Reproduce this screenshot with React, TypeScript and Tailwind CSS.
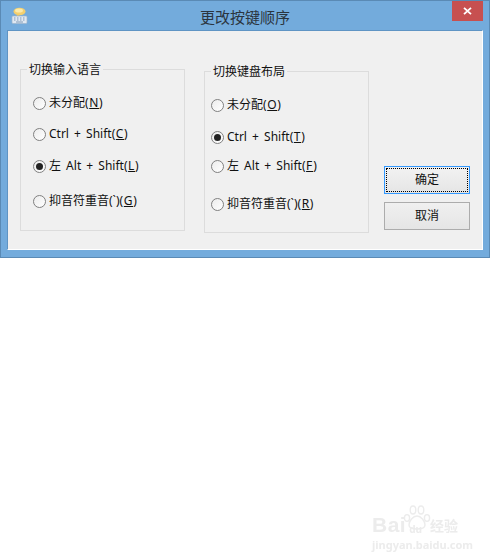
const font = { fontFamily: '"Noto Sans", "Noto Sans CJK SC", sans-serif' };

function Radio({ label, k, after, checked, mt }: { label: string; k: string; after?: string; checked?: boolean; mt: string }) {
  return (
    <div className={`flex items-center h-[16px] ${mt}`}>
      <span className="w-[13px] h-[13px] rounded-full border border-[#808080] bg-gradient-to-br from-[#ececec] to-white flex items-center justify-center shrink-0">
        {checked && <span className="w-[7px] h-[7px] rounded-full bg-[#222222]" />}
      </span>
      <span className="ml-[3px] text-[12px] leading-[16px] text-[#111111] whitespace-pre [word-spacing:2px]">
        {label}<span className="tracking-[0.6px]">(<span className="underline">{k}</span>)</span>{after}
      </span>
    </div>
  );
}

function Group({ title, children, mt, pad }: { title: string; children: React.ReactNode; mt: string; pad: string }) {
  return (
    <div className={`relative w-[165px] h-[162px] border border-[#dcdcdc] ${pad} ${mt}`}>
      <span className="absolute left-[6px] top-[-8px] px-[2px] bg-[#f0f0f0] text-[12px] leading-[16px] text-[#111111] whitespace-pre">{title}</span>
      {children}
    </div>
  );
}

export default function App() {
  return (
    <div className="w-[490px] h-[560px] bg-white relative overflow-hidden" style={font}>
      <div className="h-[258px] bg-[#73abdc] border border-[#5a8ab5] flex flex-col">
        <div className="h-[29px] flex items-start relative shrink-0">
          <svg className="ml-[10px] mt-[6px]" width="17" height="17" viewBox="0 0 17 17">
            <ellipse cx="8.5" cy="4.5" rx="6" ry="3.8" fill="#f3cf6e" />
            <ellipse cx="8" cy="3.5" rx="4" ry="2" fill="#fbeaa8" />
            <path d="M6 7.5 L5.5 10 L9 8Z" fill="#f0c45c" />
            <rect x="1" y="9" width="15" height="7.5" rx="1" fill="#dfe8f2" stroke="#9db4cc" strokeWidth="0.7" />
            <path d="M3 11h1.5M6 11h1.5M9 11h1.5M12 11h1.5M3 13h1.5M6 13h1.5M9 13h1.5M12 13h1.5M5 15h7" stroke="#7f9ab8" strokeWidth="1" />
          </svg>
          <div className="absolute left-[199px] top-[6px] text-[15px] leading-[20px] text-[#2b3540] whitespace-pre">更改按键顺序</div>
          <div className="absolute left-[451px] top-0 w-[31px] h-[20px] bg-[#c75050] flex items-center justify-center">
            <svg width="9" height="8" viewBox="0 0 9 8">
              <path d="M1 .8 8 7.2M8 .8 1 7.2" stroke="#ffffff" strokeWidth="1.8" />
            </svg>
          </div>
        </div>
        <div className="ml-[6px] w-[476px] h-[220px] bg-[#f0f0f0] border border-[#5f94c4] border-b-white border-r-white flex pl-[12px]">
          <Group title="切换输入语言" mt="mt-[38px]" pad="pl-[12px]">
            <Radio label="未分配" k="N" mt="mt-[25px]" />
            <Radio label="Ctrl + Shift" k="C" mt="mt-[15px]" />
            <Radio label="左 Alt + Shift" k="L" checked mt="mt-[16px]" />
            <Radio label="抑音符重音(`)" k="G" mt="mt-[19px]" />
          </Group>
          <div className="ml-[19px]">
            <Group title="切换键盘布局" mt="mt-[40px]" pad="pl-[6px]">
              <Radio label="未分配" k="O" mt="mt-[25px]" />
              <Radio label="Ctrl + Shift" k="T" checked mt="mt-[16px]" />
              <Radio label="左 Alt + Shift" k="F" mt="mt-[13px]" />
              <Radio label="抑音符重音(`)" k="R" mt="mt-[22px]" />
            </Group>
          </div>
          <div className="ml-[15px] flex flex-col">
            <button className="mt-[135px] w-[86px] h-[28px] border border-[#3399ff] bg-gradient-to-b from-[#f2f2f2] to-[#e5e5e5] p-[1px] text-[12px] text-[#111111]">
              <span className="flex items-center justify-center w-full h-full border border-dotted border-black">确定</span>
            </button>
            <button className="mt-[8px] w-[86px] h-[28px] border border-[#acacac] bg-gradient-to-b from-[#f0f0f0] to-[#e5e5e5] text-[12px] text-[#111111]">取消</button>
          </div>
        </div>
      </div>
      <div className="absolute left-[372px] top-[514px] w-[118px] text-[#ececec] blur-[0.5px]">
        <div className="flex items-end h-[22px] relative">
          <span className="text-[21px] leading-[22px] font-bold tracking-[0.5px]" style={{ fontFamily: '"Liberation Sans", sans-serif' }}>Bai</span>
          <span className="ml-[3px] text-[10px] leading-[13px] font-bold">du</span>
          <span className="ml-[8px] text-[14px] leading-[20px] font-bold">经验</span>
          <svg className="absolute left-[31px] top-[-9px]" width="28" height="26" viewBox="0 0 28 26" fill="none" stroke="currentColor" strokeWidth="1.4">
            <ellipse cx="4" cy="13" rx="2.6" ry="3.4" />
            <ellipse cx="10" cy="5" rx="2.8" ry="4" />
            <ellipse cx="18" cy="5" rx="2.8" ry="4" />
            <ellipse cx="24" cy="13" rx="2.6" ry="3.4" />
            <path d="M14 11c-4 0-8 5-8 9 0 3 3 4 8 4s8-1 8-4c0-4-4-9-8-9z" />
          </svg>
        </div>
        <div className="text-[11px] leading-[14px] font-bold mt-[2px] whitespace-pre">jingyan.baidu.com</div>
      </div>
    </div>
  );
}
